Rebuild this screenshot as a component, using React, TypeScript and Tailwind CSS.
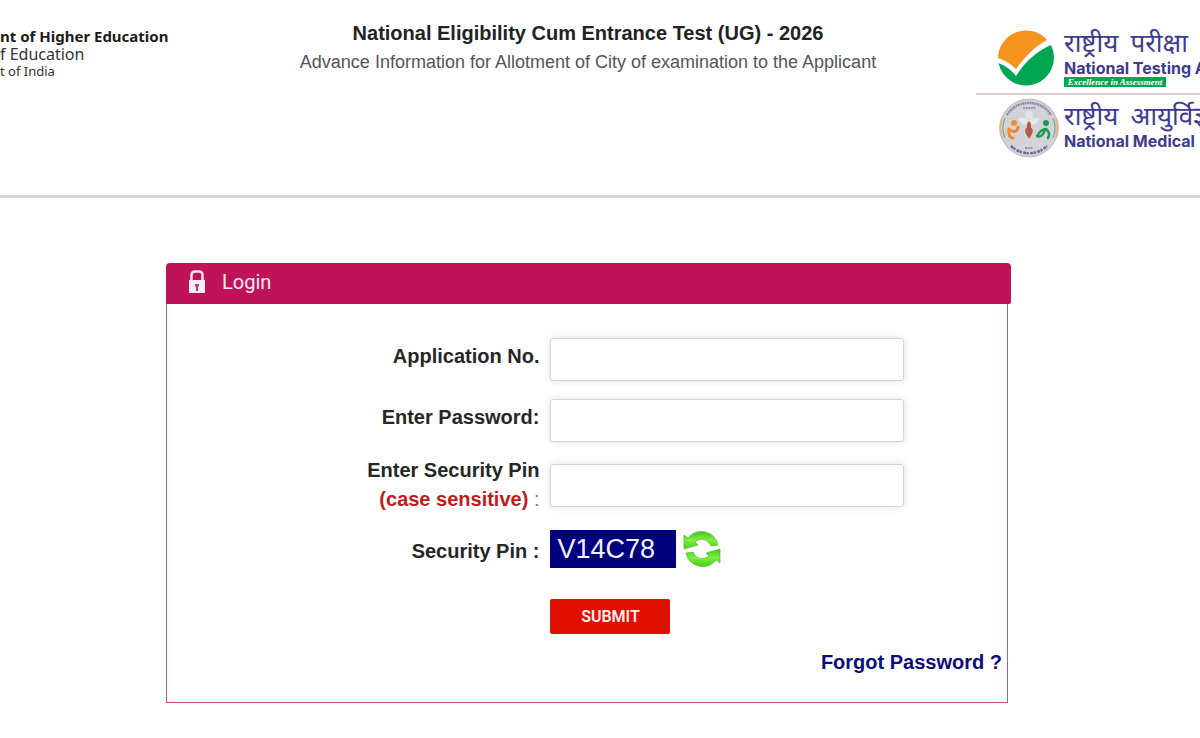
import React from "react";

function NtaLogo() {
  return (
    <svg viewBox="0 0 58 58" className="h-[58px] w-[58px] shrink-0" aria-hidden="true">
      <path d="M1 29 A28 28 0 0 1 50 11 C39 17 29 26 19 40 C13 34 7 31 1 29Z" fill="#f6921e" />
      <path d="M1.500 34 C9 37 14 41 19 47 C30 30 41 22 54 16 A28 28 0 1 1 1.500 34Z" fill="#00a651" />
    </svg>
  );
}

function NmcLogo() {
  return (
    <svg viewBox="0 0 60 60" className="h-[60px] w-[60px] shrink-0" aria-hidden="true">
      <circle cx="30" cy="30" r="29.500" fill="#c3c3cb" />
      <circle cx="30" cy="30" r="28" fill="#d3d3d7" />
      <path d="M3 20 A28.500 28.500 0 0 0 3 40" fill="none" stroke="#e5b38a" strokeWidth="2" />
      <path d="M57 20 A28.500 28.500 0 0 1 57 40" fill="none" stroke="#e5b38a" strokeWidth="2" />
      <path d="M6 20 A26 26 0 0 0 6 40" fill="none" stroke="#6fb08c" strokeWidth="1.200" />
      <path d="M54 20 A26 26 0 0 1 54 40" fill="none" stroke="#6fb08c" strokeWidth="1.200" />
      <path d="M8 17 A26 26 0 0 1 52 17" fill="none" stroke="#8585a6" strokeWidth="2.500" strokeDasharray="2 0.7 1.500 0.7" />
      <path d="M12 48 A26 26 0 0 0 48 48" fill="none" stroke="#68689a" strokeWidth="2.500" strokeDasharray="3 0.6 2 1.400" />
      <path d="M24 10h13M26 50h8" stroke="#9696aa" strokeWidth="2" strokeDasharray="2 0.6" />
      <path d="M19 20q7-1 11 2q4-3 11-2q-2 6-8 7l-3 19l-3-19q-6-1-8-7Z" fill="#e8e8ea" />
      <circle cx="30" cy="17" r="4" fill="#e3e3e7" />
      <path d="M30 23q3 3 2 6q3 3 1 7l-3 5l-3-5q-2-4 1-7q-1-3 2-6Z" fill="#b25b4c" />
      <circle cx="15" cy="25" r="3" fill="#ee8a31" />
      <path d="M10 31q-1 9 4 9M11 32q7 4 8-3" fill="none" stroke="#ee8a31" strokeWidth="3" strokeLinecap="round" />
      <circle cx="47" cy="25" r="3" fill="#1b9a55" />
      <path d="M38 38q4-7 9-7q5 4 2 9M38 38q5 2 8-6" fill="none" stroke="#1b9a55" strokeWidth="2.500" strokeLinecap="round" />
    </svg>
  );
}

function LockIcon() {
  return (
    <svg viewBox="0 0 18 24" className="h-6 w-[18px]" aria-hidden="true">
      <path d="M3.500 11V5Q3.500 1.500 7 1.500H11Q14.500 1.500 14.500 5V11" fill="none" stroke="#fbe3ee" strokeWidth="2.500" />
      <rect x="1" y="10" width="16" height="13" fill="#fdeaf3" />
      <path d="M7 14h4v2l-1 1v4H8v-4l-1-1Z" fill="#a9446f" />
    </svg>
  );
}

function RefreshIcon() {
  return (
    <svg viewBox="0 0 38 38" className="h-[38px] w-[38px]" aria-hidden="true">
      <defs>
        <linearGradient id="leaf" x1="0" y1="0" x2="0" y2="1">
          <stop offset="0" stopColor="#45c322" />
          <stop offset="0.5" stopColor="#7df03c" />
          <stop offset="1" stopColor="#42cf1d" />
        </linearGradient>
      </defs>
      <path d="M1 5L5 8A17 17 0 0 1 35 15L28 16A10 10 0 0 0 12 12L15 15L1 19Z" fill="url(#leaf)" stroke="#47b52c" strokeWidth="0.6" />
      <path d="M37 33L33 30A17 17 0 0 1 3 23L10 22A10 10 0 0 0 26 26L23 23L37 19Z" fill="url(#leaf)" stroke="#47b52c" strokeWidth="0.6" />
    </svg>
  );
}

const labelClass = "text-right text-[20px] leading-[29px] font-bold text-[#262626]";
const inputClass =
  "h-[43px] w-full rounded-[3px] border border-[#d4d4d4] bg-white px-3 text-base shadow-[0_0_8px_rgba(0,0,0,0.12)] outline-none focus:border-[#be1358]";
const hindiClass =
  "flex gap-3 font-['Noto_Sans_Devanagari','Noto_Sans',sans-serif] text-[26px] leading-[27px]";

function Header() {
  return (
    <header className="flex h-[198px] items-start overflow-hidden border-b-[3px] border-[#d6d6d6]">
      <div className="w-[200px] shrink-0 pt-[27px] font-['Noto_Sans'] whitespace-nowrap text-[#333]">
        <p className="text-[15px] leading-[18px] font-bold text-[#1c1c1c]">nt of Higher Education</p>
        <p className="text-[16px] leading-[18px]">f Education</p>
        <p className="text-[13px] leading-[16px]">t of India</p>
      </div>
      <div className="min-w-0 flex-1 pt-[19px] text-center">
        <h1 className="text-[20px] leading-[28px] font-bold text-[#222]">
          National Eligibility Cum Entrance Test (UG) - 2026
        </h1>
        <p className="text-[18px] leading-[30px] text-[#555]">
          Advance Information for Allotment of City of examination to the Applicant
        </p>
      </div>
      <div className="w-[224px] shrink-0 overflow-hidden pt-[29px] whitespace-nowrap text-[#3d3b8e]">
        <div className="flex h-[66px] gap-[9px] border-b-2 border-[#dccbd2] pl-[21px]">
          <NtaLogo />
          <div className="pt-1">
            <p lang="hi" className={hindiClass}>
              <span>राष्ट्रीय</span>
              <span>परीक्षा</span>
            </p>
            <p className="font-['Inter'] text-[16px] leading-[17px] font-bold">National Testing A</p>
            <p className="w-[102px] bg-[#0ba551] text-center font-['Liberation_Serif'] text-[9px] leading-[10px] font-bold text-white italic">
              Excellence in Assessment
            </p>
          </div>
        </div>
        <div className="flex gap-[5px] pt-[3px] pl-[23px]">
          <NmcLogo />
          <div className="pt-2">
            <p lang="hi" className={hindiClass}>
              <span>राष्ट्रीय</span>
              <span>आयुर्विज्ञान</span>
            </p>
            <p className="font-['Inter'] text-[16px] leading-[17px] font-bold">National Medical</p>
          </div>
        </div>
      </div>
    </header>
  );
}

export default function App() {
  return (
    <div className="min-h-screen bg-white font-['Liberation_Sans',Arial,sans-serif]">
      <Header />
      <main className="pt-[65px] pr-[189px] pb-9 pl-[166px]">
        <div className="flex h-[41px] items-center gap-4 rounded-t-[4px] rounded-br-[2px] bg-[#be1358] pb-1 pl-[22px]">
          <LockIcon />
          <h2 className="font-['Roboto'] text-[20px] leading-[24px] text-[#fdeaf3]">Login</h2>
        </div>
        <form
          className="mr-[3px] border border-t-0 border-[#c2577f] pt-[34px] pb-[25px]"
          onSubmit={(e) => e.preventDefault()}
        >
          <div className="grid grid-cols-[372fr_353fr_92fr] gap-x-[11px]">
            <label htmlFor="application" className={`${labelClass} pt-1`}>Application No.</label>
            <input id="application" type="text" className={inputClass} />
            <span />

            <label htmlFor="password" className={`${labelClass} mt-[18px] pt-1`}>Enter Password:</label>
            <input id="password" type="password" className={`${inputClass} mt-[18px]`} />
            <span />

            <label htmlFor="pin" className={`${labelClass} mt-[14px]`}>
              Enter Security Pin
              <br />
              <span className="text-[#c11c1c]">(case sensitive)</span>
              <span className="font-normal text-[#777]"> :</span>
            </label>
            <input id="pin" type="text" className={`${inputClass} mt-[22px]`} />
            <span />

            <span className={`${labelClass} mt-[23px] self-start`}>Security Pin :</span>
            <div className="mt-4 flex items-center gap-[7px]">
              <output className="h-[38px] w-[126px] bg-[#00007f] pl-[7px] text-[27px] leading-[38px] text-[#f1f1fb]">
                V14C78
              </output>
              <button type="button" aria-label="Refresh security pin" className="h-[38px]"><RefreshIcon /></button>
            </div>
            <span />

            <button
              type="submit"
              className="col-start-2 mt-[31px] h-[35px] w-[120px] rounded-[2px] bg-[#e00f00] font-['Roboto'] text-[16px] leading-[20px] font-semibold text-[#fff0ee]"
            >
              SUBMIT
            </button>
          </div>
          <div className="mt-[14px] pr-[5px] text-right">
            <a href="#forgot" className="text-[20px] leading-[29px] font-bold text-[#0c0c7c]">Forgot Password ?</a>
          </div>
        </form>
      </main>
    </div>
  );
}
